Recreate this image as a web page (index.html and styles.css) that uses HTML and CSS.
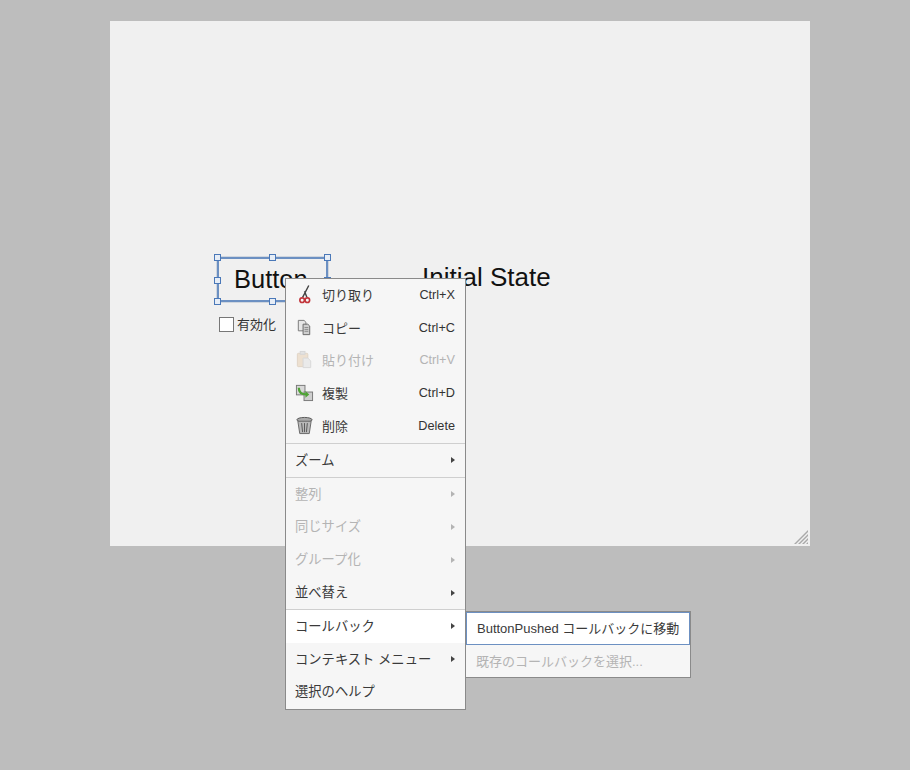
FILE: index.html
```html
<!DOCTYPE html>
<html lang="ja">
<head>
<meta charset="utf-8">
<title>App Designer</title>
<link rel="stylesheet" href="styles.css">
</head>
<body>
<main class="canvas">
  <div class="selection">
    <span class="handle h-tl"></span><span class="handle h-tc"></span><span class="handle h-tr"></span>
    <span class="handle h-ml"></span><span class="handle h-mr"></span>
    <span class="handle h-bl"></span><span class="handle h-bc"></span><span class="handle h-br"></span>
    <span class="button-label">Button</span>
  </div>
  <label class="enable"><span class="checkbox"></span><span>有効化</span></label>
  <div class="state-label">Initial State</div>
  <svg class="grip" width="16" height="16" viewBox="0 0 16 16"><g fill="#a9a9a9"><path d="M15 1v2L3 15H1z"/><path d="M15 5v2l-8 8H5z"/><path d="M15 9v2l-4 4H9z"/><path d="M15 13v2h-2z"/></g></svg>
</main>

<nav class="menu main-menu">
  <div class="row icon-row"><svg class="ico" viewBox="0 0 20 20"><path d="M14.500 0.500 8 13M10 6.500l2.500 6.500" stroke="#444" stroke-width="1.500" fill="none"/><circle cx="7.500" cy="16" r="2.400" fill="none" stroke="#c2343a" stroke-width="1.700"/><circle cx="13" cy="16" r="2.400" fill="none" stroke="#c2343a" stroke-width="1.700"/></svg><span class="lbl">切り取り</span><span class="key">Ctrl+X</span></div>
  <div class="row icon-row"><svg class="ico" viewBox="0 0 20 20"><path d="M3.500 2.500h6l2 2v9h-8z" fill="#e6e6e6" stroke="#777"/><path d="M8.500 6.500h5l2 2v9h-7z" fill="#cfcfcf" stroke="#666"/><path d="M10 10h4M10 12h4M10 14h4" stroke="#8a8a8a"/></svg><span class="lbl">コピー</span><span class="key">Ctrl+C</span></div>
  <div class="row icon-row off"><svg class="ico" viewBox="0 0 20 20"><rect x="2.500" y="3.500" width="11" height="14" rx="1" fill="#ead9c4" stroke="#d8c8b4"/><rect x="5.500" y="1.500" width="5" height="3" fill="#ddd" stroke="#ccc"/><path d="M8.500 8.500h5l3 3v7h-8z" fill="#e6e6e6" stroke="#cfcfcf"/></svg><span class="lbl">貼り付け</span><span class="key">Ctrl+V</span></div>
  <div class="row icon-row"><svg class="ico" viewBox="0 0 20 20"><rect x="1.500" y="2.500" width="9" height="10" fill="#d9d9d9" stroke="#777"/><rect x="9.500" y="9.500" width="9" height="9" fill="#cfcfcf" stroke="#777"/><path d="M4 5c0 5 3 7 8 7" stroke="#4fa336" stroke-width="2.400" fill="none"/><path d="M11 8.500 15 12l-4 3.500z" fill="#4fa336"/></svg><span class="lbl">複製</span><span class="key">Ctrl+D</span></div>
  <div class="row icon-row"><svg class="ico" viewBox="0 0 20 20"><ellipse cx="10" cy="4" rx="8" ry="2.500" fill="#aaa" stroke="#555"/><path d="M3 5.500 5 18.500h10l2-13z" fill="#b9b9b9" stroke="#666"/><path d="M7 7.500 8 17M10 7.500V17M13 7.500 12 17" stroke="#555"/></svg><span class="lbl">削除</span><span class="key">Delete</span></div>
  <hr class="sep">
  <div class="row"><span class="lbl">ズーム</span><span class="arrow"></span></div>
  <hr class="sep">
  <div class="row off"><span class="lbl">整列</span><span class="arrow"></span></div>
  <div class="row off"><span class="lbl">同じサイズ</span><span class="arrow"></span></div>
  <div class="row off"><span class="lbl">グループ化</span><span class="arrow"></span></div>
  <div class="row"><span class="lbl">並べ替え</span><span class="arrow"></span></div>
  <hr class="sep">
  <div class="row active"><span class="lbl">コールバック</span><span class="arrow"></span></div>
  <div class="row"><span class="lbl">コンテキスト メニュー</span><span class="arrow"></span></div>
  <div class="row"><span class="lbl">選択のヘルプ</span></div>
</nav>

<nav class="menu sub-menu">
  <div class="row focus"><span class="lbl">ButtonPushed コールバックに移動</span></div>
  <div class="row off"><span class="lbl">既存のコールバックを選択...</span></div>
</nav>
</body>
</html>
```
FILE: styles.css
```css
* { box-sizing: border-box; }
html, body { margin: 0; height: 100%; }
body {
  position: relative;
  width: 910px;
  height: 770px;
  overflow: hidden;
  background: #bdbdbd;
  font-family: "Liberation Sans", "Noto Sans CJK JP", sans-serif;
  color: #333;
}

.canvas {
  position: absolute;
  left: 110px;
  top: 21px;
  width: 700px;
  height: 525px;
  background: #f0f0f0;
}

.selection {
  position: absolute;
  left: 107px;
  top: 236px;
  width: 111px;
  height: 45px;
  border: 2px solid #6c90c2;
  box-shadow: 0 0 0 1px #cfd6df;
  display: flex;
  align-items: center;
  padding-left: 15px;
  background: #f0f0f0;
}
.button-label { font-size: 25.500px; color: #111; }

.handle {
  position: absolute;
  width: 7px;
  height: 7px;
  background: #e6edf6;
  border: 1px solid #4a78b8;
}
.h-tl { left: -5px; top: -5px; }
.h-tc { left: 50px; top: -5px; }
.h-tr { right: -5px; top: -5px; }
.h-ml { left: -5px; top: 18px; }
.h-mr { right: -5px; top: 18px; }
.h-bl { left: -5px; bottom: -5px; }
.h-bc { left: 50px; bottom: -5px; }
.h-br { right: -5px; bottom: -5px; }

.enable {
  position: absolute;
  left: 109px;
  top: 296px;
  display: flex;
  align-items: center;
  gap: 3px;
  font-size: 13px;
  line-height: 14px;
  color: #333;
}
.checkbox {
  width: 15px;
  height: 15px;
  background: #fff;
  border: 1px solid #777;
}

.state-label {
  position: absolute;
  left: 312px;
  top: 241px;
  font-size: 26px;
  line-height: 30px;
  color: #111;
}

.grip { position: absolute; right: 1px; bottom: 1px; }

.menu {
  position: absolute;
  background: #f6f6f6;
  border: 1px solid #8a8a8a;
  font-size: 13.300px;
}
.main-menu {
  left: 285px;
  top: 278px;
  width: 181px;
  height: 432px;
  display: flex;
  flex-direction: column;
}
.sub-menu {
  left: 466px;
  top: 611px;
  width: 225px;
  height: 67px;
  border-left: 0;
}

.row {
  flex: 0 0 auto;
  height: 32.800px;
  display: flex;
  align-items: center;
  padding: 0 10px 2px 9px;
  color: #3a3a3a;
  white-space: nowrap;
}
.icon-row { padding-left: 9px; }
.icon-row .lbl { font-size: 13px; }
.lbl { flex: 1; }
.key { font-size: 12.700px; color: #333; padding-top: 1px; }
.ico { width: 19px; height: 19px; margin-right: 8px; flex: none; }

.off .lbl, .off .key { color: #b4b4b4; }
.off .arrow { border-left-color: #b4b4b4; }
.off .ico { opacity: 0.75; }

.arrow {
  width: 0;
  height: 0;
  border-left: 4px solid #444;
  border-top: 3px solid transparent;
  border-bottom: 3px solid transparent;
  margin-top: 2px;
}

.sep {
  flex: none;
  margin: 0;
  height: 1px;
  border: 0;
  background: #cfcfcf;
}

.active { background: #fff; }

.sub-menu .row { height: 33px; padding: 0 10px 2px; font-size: 13px; }
.sub-menu .focus {
  background: #fff;
  border: 1.500px solid #6c90c2;
  border-left-width: 1px;
  padding-left: 10px;
  height: 33px;
}
```
